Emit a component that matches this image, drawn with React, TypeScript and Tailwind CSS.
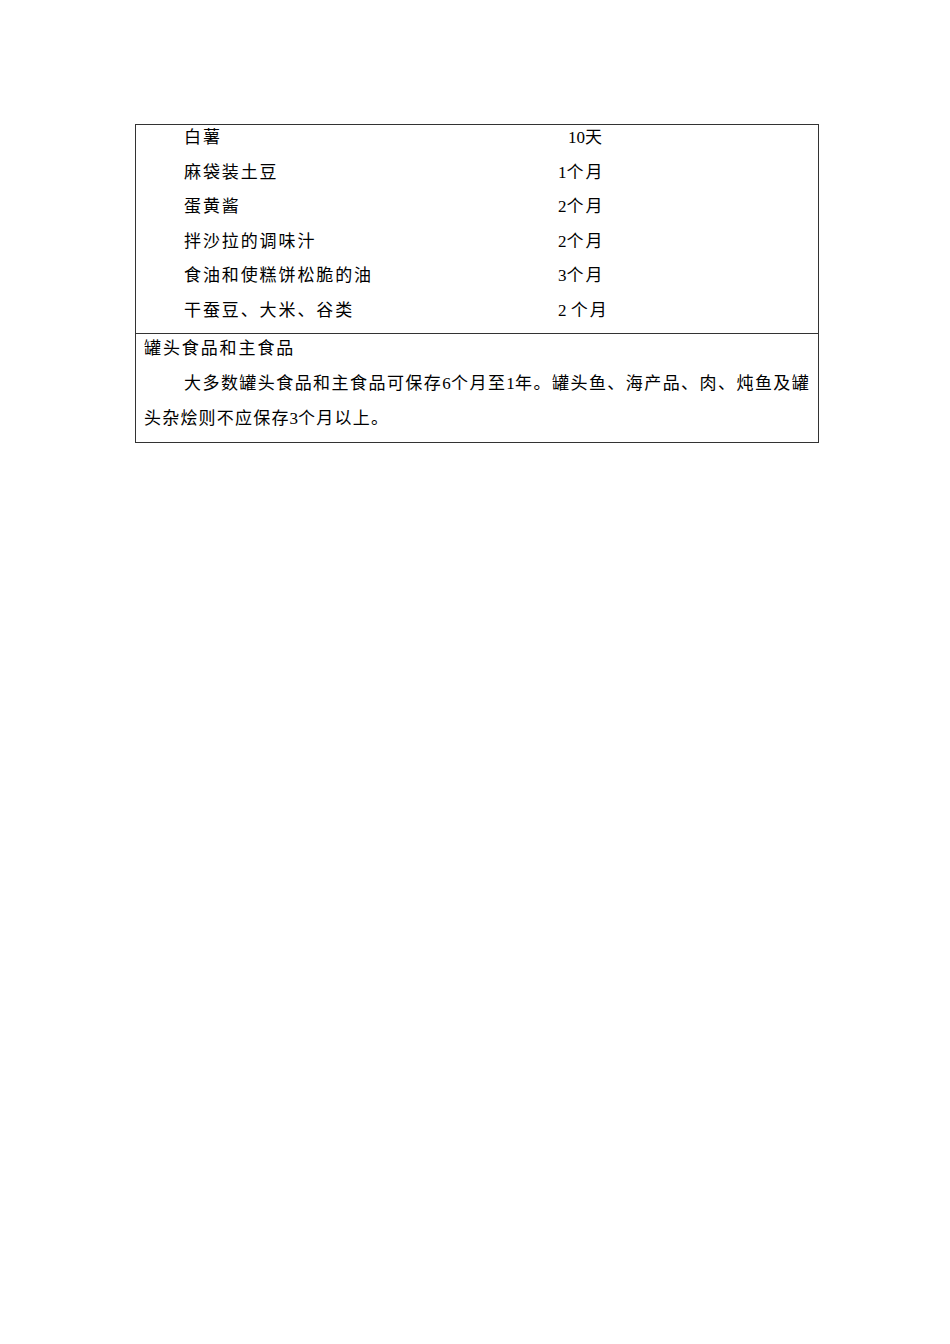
const rows: [string, string, string, string][] = [
  ['白薯', '10', '天', 'pl-[10px]'],
  ['麻袋装土豆', '1', '个月', 'pl-0'],
  ['蛋黄酱', '2', '个月', 'pl-0'],
  ['拌沙拉的调味汁', '2', '个月', 'pl-0'],
  ['食油和使糕饼松脆的油', '3', '个月', 'pl-0'],
  ['干蚕豆、大米、谷类', '2 ', '个月', 'pl-0'],
];

export default function App() {
  return (
    <div
      className="w-[950px] h-[1344px] bg-white text-black pt-[124px] pl-[135px]"
      style={{ fontFamily: '"Liberation Serif", "Noto Sans CJK SC", serif' }}
    >
      <div className="w-[684px] border border-[#333] text-[17px] tracking-[1.9px]">
        <div className="pb-[2px]">
          {rows.map(([item, num, unit, pad]) => (
            <div key={item} className="flex leading-[34.5px] -mt-[3px] first:-mt-[4px] mb-[3px]">
              <div className="w-[422px] pl-[48px]">{item}</div>
              <div className={pad}>
                <span className="tracking-normal whitespace-pre">{num}</span>
                {unit}
              </div>
            </div>
          ))}
        </div>
        <div className="border-t border-[#333] px-[8px] leading-[35px] pb-[6px]">
          <p className="-mt-[3px]">罐头食品和主食品</p>
          <p className="indent-[40px] text-justify tracking-[1.2px]">
            大多数罐头食品和主食品可保存<span className="tracking-normal">6</span>个月至<span className="tracking-normal">1</span>年。罐头鱼、海产品、肉、炖鱼及罐头杂烩则不应保存<span className="tracking-normal">3</span>个月以上。
          </p>
        </div>
      </div>
    </div>
  );
}
